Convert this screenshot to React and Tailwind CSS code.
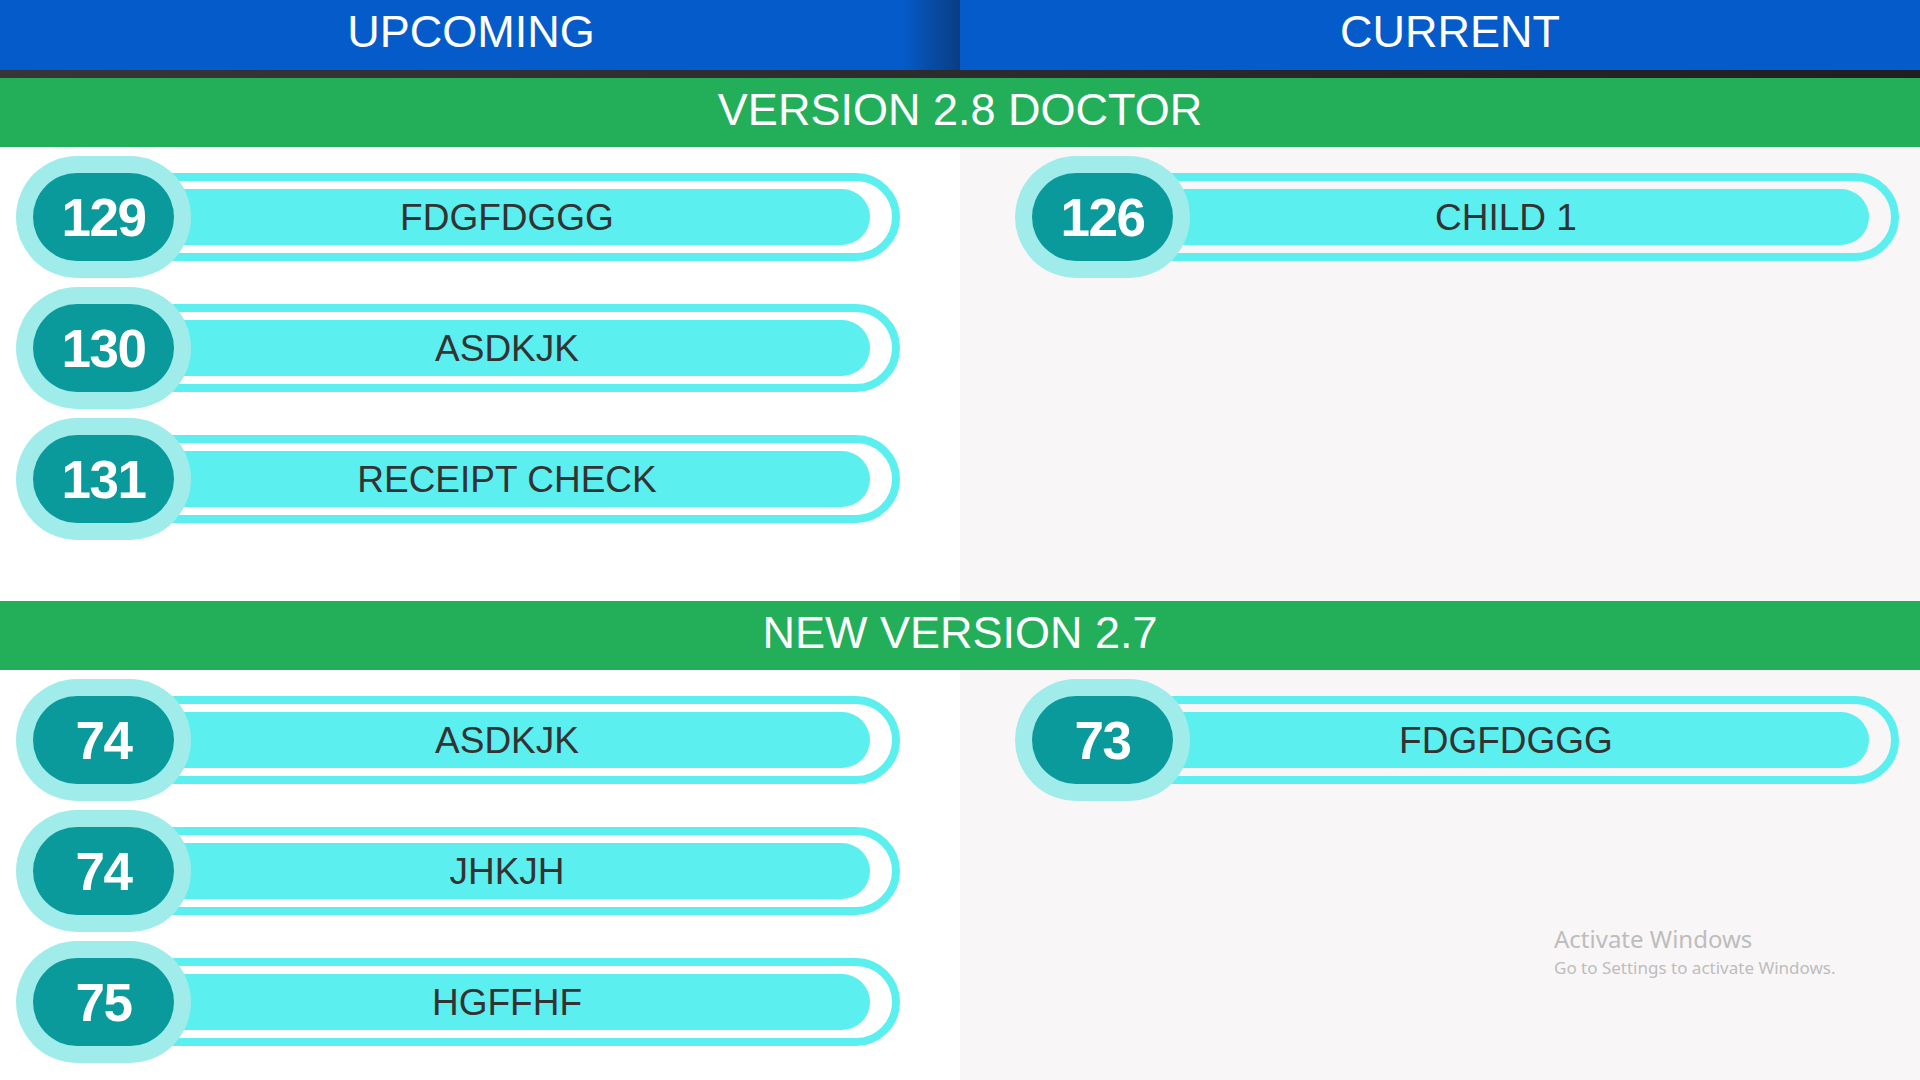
import React from 'react';

const sections = [
  {
    title: 'VERSION 2.8 DOCTOR',
    height: 'h-[454px]',
    upcoming: [
      { id: 129, name: 'FDGFDGGG' },
      { id: 130, name: 'ASDKJK' },
      { id: 131, name: 'RECEIPT CHECK' },
    ],
    current: [{ id: 126, name: 'CHILD 1' }],
  },
  {
    title: 'NEW VERSION 2.7',
    height: 'h-[410px]',
    upcoming: [
      { id: 74, name: 'ASDKJK' },
      { id: 74, name: 'JHKJH' },
      { id: 75, name: 'HGFFHF' },
    ],
    current: [{ id: 73, name: 'FDGFDGGG' }],
  },
];

function TicketRow({ id, name }) {
  return (
    <div className="flex items-center h-[122px]">
      {/* number badge */}
      <div className="relative z-10 shrink-0 w-[175px] h-[122px] rounded-full bg-[#a0ecea] flex items-center justify-center">
        <div className="w-[141px] h-[88px] rounded-full bg-[#0a9a9b] flex items-center justify-center">
          <span className="text-white font-bold text-[53px] tracking-[-1.5px] leading-none">
            {id}
          </span>
        </div>
      </div>
      {/* title bar */}
      <div className="-ml-[60px] shrink-0 w-[769px] h-[88px] rounded-full border-[8px] border-[#5cefef] py-[8px] pr-[22px]">
        <div className="h-full w-full rounded-full bg-[#5cefef] flex items-center justify-center pl-[5px]">
          <span className="text-[#333333] text-[37px] leading-none">{name}</span>
        </div>
      </div>
    </div>
  );
}

function Section({ section }) {
  return (
    <div className="flex flex-col">
      <div className="h-[69px] bg-[#23af5a] flex items-center justify-center pb-[7px]">
        <span className="text-white text-[45px] leading-none">{section.title}</span>
      </div>
      <div className={`grid grid-cols-2 ${section.height}`}>
        <div className="bg-white flex flex-col gap-[9px] pt-[9px] pl-[16px]">
          {section.upcoming.map((item, i) => (
            <TicketRow key={i} id={item.id} name={item.name} />
          ))}
        </div>
        <div className="bg-[#f8f6f7] flex flex-col gap-[9px] pt-[9px] pl-[55px]">
          {section.current.map((item, i) => (
            <TicketRow key={i} id={item.id} name={item.name} />
          ))}
        </div>
      </div>
    </div>
  );
}

export default function App() {
  return (
    <div className="relative w-[1920px] h-[1080px] overflow-hidden bg-white font-['Liberation_Sans',Arial,sans-serif]">
      <div className="grid grid-cols-2 h-[70px]">
        <div className="bg-[linear-gradient(90deg,#055bc9_94%,#0a3d82)] flex items-center justify-center pr-[18px] pb-[7px]">
          <span className="text-white text-[45px] leading-none">UPCOMING</span>
        </div>
        <div className="bg-[#055bc9] flex items-center justify-center pl-[20px] pb-[7px]">
          <span className="text-white text-[45px] leading-none">CURRENT</span>
        </div>
      </div>
      <div className="h-[8px] bg-[linear-gradient(90deg,#363636,#2c2c2c_50%,#1f1f1f)]" />

      {sections.map((s, i) => (
        <Section key={i} section={s} />
      ))}

      {/* windows watermark */}
      <div className="absolute left-[1554px] top-[924px] text-[#bdbdbd] font-['Noto_Sans','Open_Sans',sans-serif] pointer-events-none">
        <div className="text-[24px] leading-[30px]">Activate Windows</div>
        <div className="text-[17px] leading-[22px] mt-[3px]">Go to Settings to activate Windows.</div>
      </div>
    </div>
  );
}
